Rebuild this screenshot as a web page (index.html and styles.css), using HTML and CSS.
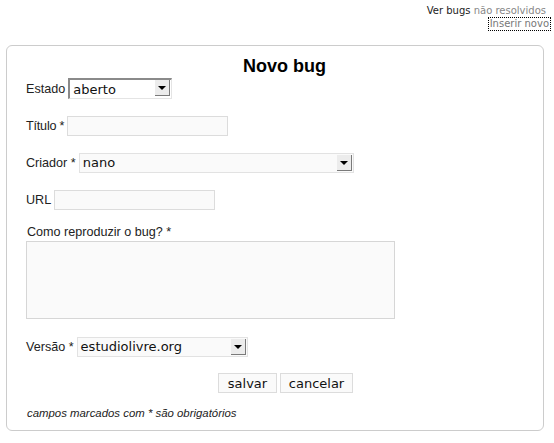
FILE: index.html
```html
<!DOCTYPE html>
<html lang="pt">
<head>
<meta charset="utf-8">
<title>Novo bug</title>
<link rel="stylesheet" href="styles.css">
</head>
<body>
<div class="toplinks">
  <div><a class="strong" href="#">Ver bugs</a> <a class="muted" href="#">não resolvidos</a></div>
  <div><a class="current" href="#">Inserir novo</a></div>
</div>
<div class="box">
  <h1 class="title">Novo bug</h1>
  <form class="form">
    <div class="row">
      <label>Estado</label>
      <span class="sel sel-inset w-estado"><span class="sel-text">aberto</span><span class="arrow"></span></span>
    </div>
    <div class="row">
      <label class="tight">Título *</label>
      <input class="field w-titulo" type="text">
    </div>
    <div class="row">
      <label>Criador *</label>
      <span class="sel w-criador"><span class="sel-text">nano</span><span class="arrow"></span></span>
    </div>
    <div class="row">
      <label>URL</label>
      <input class="field w-url" type="text">
    </div>
    <div class="block">
      <label>Como reproduzir o bug? *</label>
      <textarea class="area"></textarea>
    </div>
    <div class="row">
      <label>Versão *</label>
      <span class="sel w-versao"><span class="sel-text">estudiolivre.org</span><span class="arrow"></span></span>
    </div>
    <div class="buttons">
      <button type="button" class="btn w-salvar">salvar</button>
      <button type="button" class="btn w-cancelar">cancelar</button>
    </div>
    <p class="note">campos marcados com * são obrigatórios</p>
  </form>
</div>
</body>
</html>
```
FILE: styles.css
```css
html, body {
  margin: 0;
  padding: 0;
  background: #ffffff;
}
body {
  font-family: "Liberation Sans", Arial, sans-serif;
  color: #222;
  font-size: 13px;
}
.toplinks {
  font-family: "DejaVu Sans", sans-serif;
  font-size: 10px;
  text-align: right;
  padding: 5px 8px 0 0;
  line-height: 12px;
}
.toplinks a {
  text-decoration: none;
}
.toplinks .strong { color: #222; }
.toplinks .muted { color: #888; }
.toplinks .current {
  color: #777;
  outline: 1px dotted #000;
  display: inline-block;
  margin-top: 1px;
  margin-right: -4px;
  padding: 0 1px;
}
.box {
  margin: 15px 10px 0 6px;
  border: 1px solid #cccccc;
  border-radius: 6px;
  height: 386px;
  box-sizing: border-box;
  padding: 0 0 0 19px;
}
.title {
  margin: 9px 0 0 0;
  padding: 0;
  text-align: center;
  font-size: 18px;
  line-height: 23px;
  font-weight: bold;
  color: #000;
  width: 517px;
}
.form {
  margin: 0;
  display: flex;
  flex-direction: column;
}
.row {
  display: flex;
  align-items: center;
  gap: 3px;
  height: 21px;
  margin-bottom: 16px;
}
.row label, .block label {
  font-size: 12.6px;
  color: #222;
}
.row label.tight {
  letter-spacing: -0.2px;
}
.field {
  height: 20px;
  box-sizing: border-box;
  border: 1px solid #dcdcdc;
  background: #fafafa;
  margin: 0;
  padding: 0 2px;
}
.w-titulo { width: 161px; }
.w-url { width: 161px; }
.sel {
  position: relative;
  display: inline-flex;
  align-items: center;
  height: 20px;
  box-sizing: border-box;
  border: 1px solid #e2e2e2;
  background: #fafafa;
  font-family: "DejaVu Sans", sans-serif;
  font-size: 13px;
  color: #111;
}
.sel-inset {
  height: 21px;
  border-top: 2px solid #8a8a8a;
  border-left: 2px solid #8a8a8a;
  border-right: 1px solid #e4e4e4;
  border-bottom: 1px solid #e4e4e4;
  background: #fff;
}
.sel-text {
  padding-left: 3px;
}
.arrow {
  position: absolute;
  right: 1px;
  top: 1px;
  width: 14px;
  height: 15px;
  background: #ececec;
  border-right: 1px solid #7a7a7a;
  border-bottom: 1px solid #7a7a7a;
}
.sel-inset .arrow {
  top: 0;
  right: 1px;
}
.arrow::after {
  content: "";
  position: absolute;
  left: 3px;
  top: 6px;
  border-left: 4px solid transparent;
  border-right: 4px solid transparent;
  border-top: 4px solid #000;
}
.w-estado { width: 104px; }
.w-criador { width: 275px; }
.w-versao { width: 171px; }
.block {
  display: flex;
  flex-direction: column;
  gap: 2px;
  margin-top: -1px;
  margin-bottom: 17px;
}
.block label {
  line-height: 14px;
  padding-left: 1px;
}
.area {
  width: 369px;
  height: 78px;
  box-sizing: border-box;
  border: 1px solid #d6d6d6;
  background: #fafafa;
  margin: 0;
  resize: none;
}
.buttons {
  display: flex;
  justify-content: flex-end;
  gap: 3px;
  width: 327px;
  margin-top: 0;
}
.btn {
  height: 20px;
  box-sizing: border-box;
  border: 1px solid #dcdcdc;
  background: #fafafa;
  font-family: "DejaVu Sans", sans-serif;
  font-size: 13px;
  color: #111;
  padding: 0;
  margin: 0;
}
.w-salvar { width: 59px; }
.w-cancelar { width: 73px; }
.note {
  margin: 14px 0 0 1px;
  font-size: 11.4px;
  font-style: italic;
  color: #222;
}
```
